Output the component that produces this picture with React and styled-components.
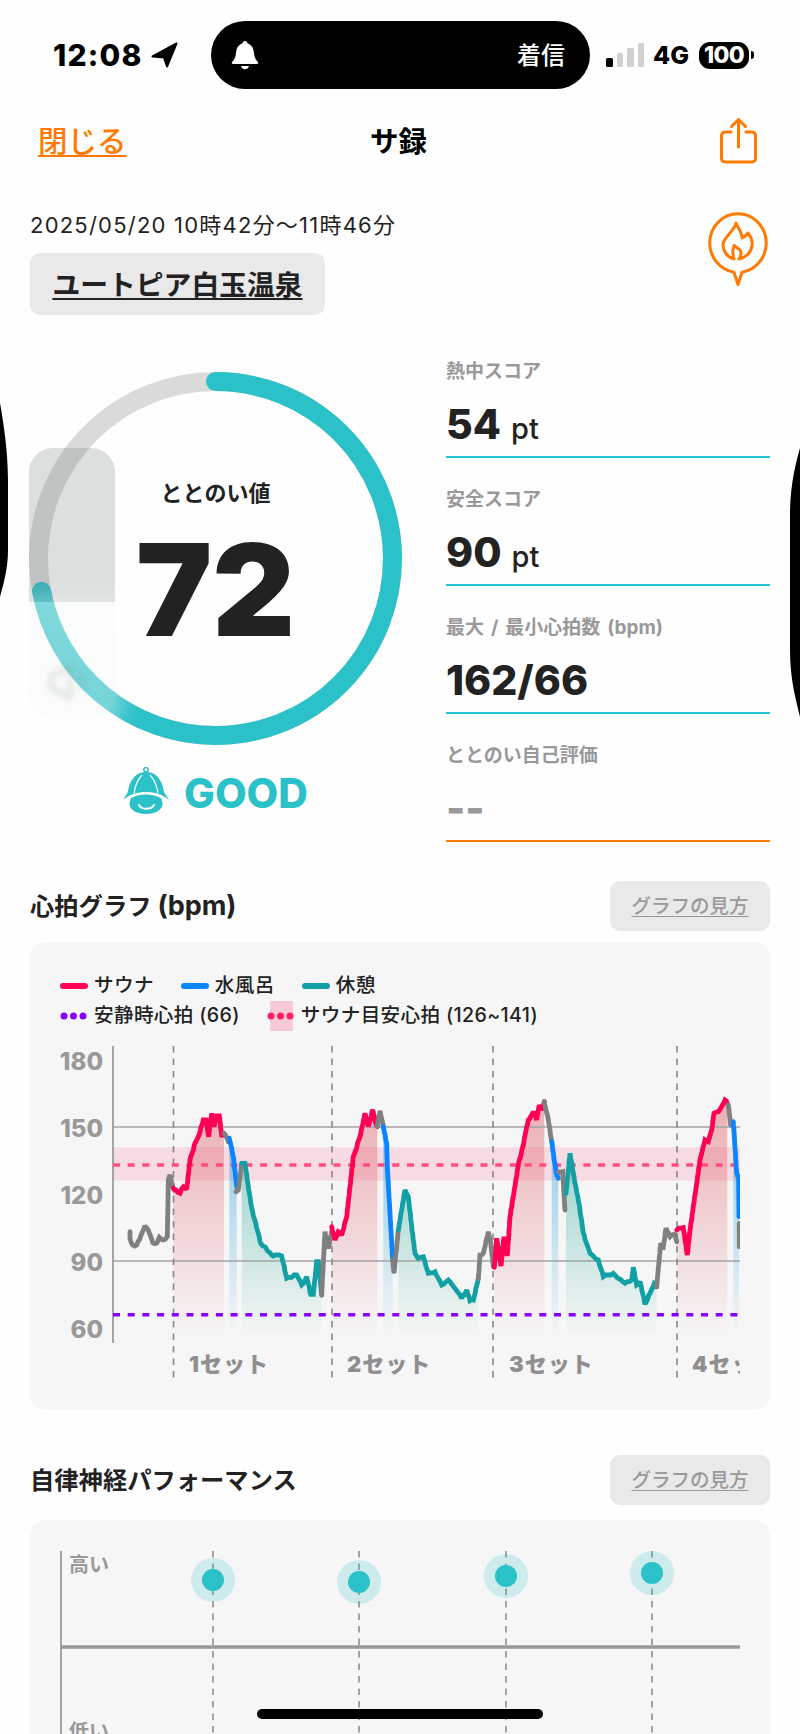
import React from "react";
import styled, { createGlobalStyle } from "styled-components";
import { Volume1 } from "lucide-react";

const TEAL = "#2bc1c8";
const ORANGE = "#ff7a00";
const INK = "#222222";
const MUTED = "#999999";
const FONT = `Inter, "Noto Sans CJK JP", sans-serif`;

const Global = createGlobalStyle`
  html, body { margin: 0; padding: 0; background: #fff; }
  body { font-family: ${FONT}; color: ${INK}; }
`;

const Screen = styled.div`
  position: relative;
  width: 800px;
  height: 1734px;
  overflow: hidden;
  background: #fefefe;
`;

/* ---------- status bar ---------- */
const StatusBar = styled.div`
  display: flex;
  align-items: center;
  height: 110px;
  padding-left: 53px;
`;
const TimeGroup = styled.div`
  display: flex;
  align-items: center;
  gap: 8px;
  width: 158px;
`;
const Time = styled.span`
  font-size: 30px;
  font-weight: 800;
  letter-spacing: 1.2px;
  color: #000;
  line-height: 1;
`;
const Island = styled.div`
  display: flex;
  align-items: center;
  justify-content: space-between;
  width: 379px;
  height: 68px;
  box-sizing: border-box;
  padding: 0 25px 0 20px;
  border-radius: 34px;
  background: #000;
`;
const IslandText = styled.span`
  color: #fff;
  font-size: 24px;
  font-weight: 500;
  padding-bottom: 4px;
`;
const StatusRight = styled.div`
  display: flex;
  align-items: center;
  margin-left: 16px;
`;
const Signal = styled.div`
  display: flex;
  align-items: flex-end;
  gap: 4px;
  height: 24px;
  margin-right: 9px;
`;
const SignalBar = styled.span`
  width: 6.5px;
  height: ${(p) => p.$h}px;
  border-radius: 1.5px;
  background: ${(p) => (p.$on ? "#000" : "#d0d0d0")};
`;
const Net = styled.span`
  font-size: 25px;
  font-weight: 800;
  color: #000;
  width: 46px;
`;
const Battery = styled.span`
  display: flex;
  align-items: center;
  justify-content: center;
  width: 50px;
  height: 27px;
  border-radius: 11px;
  background: #000;
  color: #fff;
  font-size: 23px;
  font-weight: 800;
  letter-spacing: -0.6px;
`;
const BatteryTip = styled.span`
  width: 2.5px;
  height: 8px;
  margin-left: 2px;
  border-radius: 0 3px 3px 0;
  background: #000;
`;

/* ---------- nav ---------- */
const Nav = styled.div`
  display: grid;
  grid-template-columns: 1fr auto 1fr;
  align-items: center;
  height: 62px;
  padding: 0 43px 0 38px;
`;
const CloseLink = styled.a`
  justify-self: start;
  margin-bottom: 4px;
  font-size: 29.5px;
  font-weight: 500;
  color: ${ORANGE};
  text-decoration: underline;
  text-underline-offset: 3px;
  text-decoration-thickness: 2px;
`;
const NavTitle = styled.div`
  margin: 0 0 4px 2px;
  font-size: 28.5px;
  font-weight: 700;
  color: #000;
`;
const ShareSlot = styled.div`
  justify-self: end;
  display: flex;
`;

/* ---------- facility ---------- */
const Visit = styled.div`
  display: flex;
  justify-content: space-between;
  align-items: flex-start;
  padding: 40px 32px 0 30px;
`;
const DateText = styled.div`
  font-size: 22px;
  line-height: 26px;
  font-weight: 400;
  letter-spacing: 1.22px;
  color: ${INK};
`;
const FacilityChip = styled.div`
  display: inline-flex;
  align-items: center;
  justify-content: center;
  width: 295px;
  height: 62px;
  margin-top: 15px;
  padding-bottom: 2px;
  box-sizing: border-box;
  border-radius: 10px;
  background: #e9e9e9;
  font-size: 27.8px;
  font-weight: 700;
  color: ${INK};
  text-decoration: underline;
  text-underline-offset: 3px;
  text-decoration-thickness: 2px;
`;

/* ---------- score ---------- */
const ScoreArea = styled.div`
  display: flex;
  padding: 43px 30px 0 29px;
`;
const GaugeColumn = styled.div`
  display: flex;
  flex-direction: column;
  align-items: center;
  width: 373px;
  padding-top: 14px;
`;
const Gauge = styled.div`
  display: grid;
  width: 373px;
  height: 373px;
  & > * { grid-area: 1 / 1; }
`;
const GaugeCenter = styled.div`
  display: flex;
  flex-direction: column;
  align-items: center;
  padding-top: 108px;
`;
const GaugeLabel = styled.div`
  font-size: 22px;
  line-height: 26px;
  font-weight: 700;
`;
const GaugeValue = styled.div`
  margin-top: 34px;
  font-size: 128px;
  line-height: 100px;
  font-weight: 900;
  color: ${INK};
`;
const Rank = styled.div`
  display: flex;
  align-items: center;
  gap: 15px;
  margin-top: 22px;
`;
const RankText = styled.span`
  font-size: 41px;
  line-height: 52px;
  font-weight: 800;
  color: ${TEAL};
`;
const Stats = styled.div`
  display: grid;
  flex: 1;
  gap: 28px;
  margin-left: 44px;
  align-content: start;
`;
const Stat = styled.div`
  height: 100px;
  box-sizing: border-box;
  border-bottom: 2px solid ${(p) => (p.$accent ? ORANGE : "#22c7d0")};
`;
const StatLabel = styled.div`
  font-size: 19px;
  line-height: 28px;
  font-weight: 700;
  word-spacing: 2.5px;
  color: ${MUTED};
`;
const StatValue = styled.div`
  display: flex;
  align-items: baseline;
  gap: 10px;
  margin-top: 16px;
  font-size: 41px;
  line-height: 44px;
  font-weight: 800;
  color: ${(p) => (p.$empty ? MUTED : INK)};
`;
const StatUnit = styled.span`
  font-size: 29px;
  font-weight: 500;
`;

/* ---------- sections ---------- */
const Section = styled.section`
  margin-top: ${(p) => p.$top}px;
  padding: 0 30px;
`;
const SectionHead = styled.div`
  display: flex;
  justify-content: space-between;
  align-items: center;
  height: 50px;
`;
const SectionTitle = styled.h2`
  margin: 0 0 4px;
  font-size: 24.3px;
  font-weight: 700;
  color: ${INK};
`;
const TitleLatin = styled.span`
  margin-left: 6px;
  font-size: 27px;
`;
const GuideButton = styled.button`
  width: 160px;
  height: 50px;
  padding: 0 0 4px;
  border: 0;
  border-radius: 10px;
  background: #e9e9e9;
  font-family: ${FONT};
  font-size: 19.5px;
  font-weight: 500;
  color: ${MUTED};
  text-decoration: underline;
  text-underline-offset: 3px;
`;
const Card = styled.div`
  margin-top: ${(p) => p.$top}px;
  height: ${(p) => p.$h}px;
  border-radius: 16px;
  background: #f6f6f6;
  overflow: hidden;
`;
const Legend = styled.div`
  display: grid;
  padding: 29px 0 0 30px;
`;
const LegendRow = styled.div`
  display: flex;
  gap: 27px;
  height: 30px;
`;
const LegendItem = styled.div`
  display: flex;
  align-items: center;
  gap: 6px;
  font-size: 19.6px;
  letter-spacing: 0.35px;
  line-height: 26px;
  font-weight: 500;
  color: ${INK};
`;
const LegendLabel = styled.span`
  padding-bottom: 3px;
`;
const ChartSvg = styled.svg`
  display: block;
  margin-top: ${(p) => p.$top}px;
`;
const AxisText = styled.text`
  font-family: ${FONT};
  font-size: 24px;
  font-weight: 800;
  fill: ${MUTED};
`;
const SetText = styled.text`
  font-family: ${FONT};
  font-size: 22px;
  font-weight: 900;
  fill: #8f8f8f;
`;
const LevelText = styled.text`
  font-family: ${FONT};
  font-size: 20px;
  font-weight: 700;
  fill: ${MUTED};
`;

/* ---------- overlays ---------- */
const SideBlob = styled.svg`
  position: absolute;
  top: 0;
  left: 0;
  pointer-events: none;
`;
const VolumeHud = styled.div`
  position: absolute;
  left: 29px;
  top: 448px;
  width: 86px;
  height: 154px;
  border-radius: 24px 24px 0 0;
  background: rgba(110, 120, 120, 0.23);
`;
const VolumeFog = styled.div`
  position: absolute;
  left: 29px;
  top: 602px;
  width: 86px;
  height: 118px;
  display: flex;
  align-items: flex-start;
  justify-content: center;
  padding-top: 55px;
  box-sizing: border-box;
  border-radius: 0 0 24px 24px;
  background: linear-gradient(rgba(246, 248, 248, 0.42), rgba(243, 246, 246, 0.36));
  box-shadow: 0 6px 24px 6px rgba(255, 255, 255, 0.45);
  color: rgba(110, 120, 120, 0.2);
  & > svg { filter: blur(3px); }
`;
const HomeBar = styled.div`
  position: absolute;
  left: 257px;
  top: 1709px;
  width: 286px;
  height: 10px;
  border-radius: 5px;
  background: #000;
`;

/* ---------- data ---------- */
const L = (a) => a.map(([x, y]) => [20 + x / 3, 1130 + y / 3]);
const R = (a) => a.map(([x, y]) => [400 + x / 3, 1130 + y / 3]);
const COLORS = { gray: "#808080", red: "#ff0055", blue: "#0a84ff", teal: "#12a0a4" };

const segments = [
  ["gray", L([[330,305],[330,325],[338,345],[350,345],[358,330],[375,288],[385,300],[398,338],[410,340],[418,322],[430,330],[442,320],[445,150],[450,135],[460,175]])],
  ["red", L([[460,175],[468,180],[480,190],[490,170],[500,178],[510,90],[525,40],[535,20],[550,-30],[558,-30],[566,20],[575,-50],[582,-10],[590,-42],[598,-42],[605,15],[612,15]])],
  ["gray", L([[612,10],[625,35]])],
  ["blue", L([[628,25],[640,80],[650,170]])],
  ["gray", L([[648,185],[655,180],[665,100]])],
  ["teal", L([[665,100],[675,100],[685,170],[695,235],[712,300],[722,340],[735,350],[745,365],[760,378],[785,378],[800,445],[830,435],[845,465],[860,440],[872,493],[880,493],[890,395],[895,395],[905,495]])],
  ["gray", L([[905,495],[915,305],[925,355],[935,305]])],
  ["red", L([[935,290],[945,330],[955,305],[965,315],[980,260],[1000,80],[1020,20],[1035,-50],[1045,-10],[1058,-60],[1065,-30],[1072,-10]])],
  ["gray", L([[1072,-10],[1080,-58],[1090,-10]])],
  ["blue", L([[1090,-10],[1100,40],[1102,110],[1110,250],[1118,390]])],
  ["gray", L([[1118,390],[1122,430],[1135,300]])],
  ["teal", [...L([[1135,300],[1145,240],[1155,180],[1165,200],[1175,290],[1185,370],[1195,385]]), ...R([[70,380],[85,430],[105,425],[125,465],[145,450],[185,505],[200,480],[210,512],[220,510],[235,445]])]],
  ["gray", R([[235,445],[240,375],[250,370],[265,305],[272,340],[280,410]])],
  ["red", R([[283,412],[290,325],[303,408],[312,320],[322,378],[330,260],[355,105],[370,45],[380,-10],[385,-30],[400,-55],[410,-30],[418,-75],[425,-60],[433,-85]])],
  ["gray", R([[433,-85],[445,-30],[455,35]])],
  ["blue", R([[455,35],[468,125],[475,145]])],
  ["gray", R([[475,125],[488,125],[495,240]])],
  ["teal", R([[498,190],[510,70],[525,160],[537,220],[550,310],[570,370],[595,390],[610,440],[640,430],[655,445],[675,460],[695,450],[700,412],[710,465],[720,455],[735,522],[750,490],[763,460],[770,470]])],
  ["gray", R([[770,470],[782,340],[790,350],[798,295],[810,320],[825,310],[830,335]])],
  ["red", R([[830,300],[850,293],[862,375],[870,300],[900,90],[915,30],[925,35],[935,0],[942,-50],[955,-55],[975,-90],[982,-80]])],
  ["gray", R([[985,-75],[992,-15]])],
  ["blue", R([[1000,-25],[1010,130],[1016,150],[1017,260]])],
  ["gray", R([[1018,280],[1018,350]])],
];

const pts = (a) => a.map(([x, y]) => `${x.toFixed(1)},${y.toFixed(1)}`).join(" ");
const area = (a, bottom) => pts([...a, [a[a.length - 1][0], bottom], [a[0][0], bottom]]);
const stepped = (a) => {
  const out = [a[0]];
  for (let i = 1; i < a.length; i++) {
    const [x0, y0] = a[i - 1];
    const [x1, y1] = a[i];
    const n = Math.max(1, Math.ceil(Math.hypot(x1 - x0, y1 - y0) / 3));
    for (let k = 1; k <= n; k++) {
      const px = x0 + ((x1 - x0) * k) / n;
      const py = y0 + ((y1 - y0) * k) / n;
      out.push(k === n ? [px, py] : [px, Math.round(py / 2.233) * 2.233]);
    }
  }
  return out;
};

const y = (v) => 1261 - (v - 90) * (67 / 30);
const axisLabels = [[180, 1061], [150, 1128], [120, 1195], [90, 1262], [60, 1329]];
const setLines = [173.5, 332, 493, 677];
const setLabels = [["1セット", 189], ["2セット", 347], ["3セット", 509], ["4セット", 692]];
const ansLines = [213, 359, 506, 652];
const ansDots = [[213, 1580], [359, 1582], [506, 1576], [652, 1573]];
const stats = [
  { label: "熱中スコア", value: "54", unit: "pt" },
  { label: "安全スコア", value: "90", unit: "pt" },
  { label: "最大 / 最小心拍数 (bpm)", value: "162/66" },
];

const R_MID = 177;
const CIRC = 2 * Math.PI * R_MID;

/* ---------- drawings ---------- */
const LocationArrow = () => (
  <svg width="27" height="26" viewBox="0 0 27 26">
    <path d="M25.5 1.5 1.5 14.5l11.5 1 3 9z" fill="#000" stroke="#000" strokeWidth="2" strokeLinejoin="round" />
  </svg>
);
const Bell = () => (
  <svg width="28" height="30" viewBox="0 0 28 30">
    <path d="M14 1c1.5 0 2.4 1 2.6 2.4C21 4.6 22.6 8.6 23 13c.4 4 1.4 6.600 4 9 .6.800.2 2-1 2H2c-1.200 0-1.600-1.200-1-2 2.600-2.400 3.600-5 4-9 .4-4.400 2-8.400 6.400-9.600C11.600 2 12.500 1 14 1z" fill="#fff" />
    <path d="M10 26h8c-.4 2-2 3.200-4 3.200S10.400 28 10 26z" fill="#fff" />
  </svg>
);
const ShareIcon = () => (
  <svg width="37" height="46" viewBox="0 0 37 46" fill="none" stroke={ORANGE} strokeWidth="3" strokeLinecap="round" strokeLinejoin="round">
    <path d="M11 14H5a3.500 3.500 0 0 0-3.500 3.500v23A3.500 3.500 0 0 0 5 44h27a3.500 3.500 0 0 0 3.500-3.500v-23A3.500 3.500 0 0 0 32 14h-6" />
    <path d="M18.500 29V2M11.500 8.500l7-7 7 7" />
  </svg>
);
const FlamePin = () => (
  <svg width="60" height="74" viewBox="0 0 60 74" fill="none" stroke={ORANGE} strokeWidth="3" strokeLinejoin="round" strokeLinecap="round">
    <path d="M30 72.500 26 60.200C13 58.300 1.700 46 1.700 31 1.700 15 14.400 1.700 30 1.700S58.300 15 58.300 31c0 15-11.300 27.300-24.300 29.200z" />
    <path d="M28 11C30 16 34 20 34 26C36 25 39 23 40 21C43 25 45 29 44 34C43 41 37 46 31 47C33 44 34 41 32 38C30 36 28 35 26 33.500C26 36 24 38 25 41C25 43 25 45 26 47C19 45 15 39 15 33C15 25 26 20 28 11z" />
  </svg>
);
const MascotHat = () => (
  <svg width="46" height="52" viewBox="0 0 46 52">
    <circle cx="23" cy="2.800" r="2.200" fill="none" stroke={TEAL} strokeWidth="1.500" />
    <path d="M23 5C11 5 6 16 5 25L0 33C7 27 15 25 23 25S39 27 46 33L41 25C40 16 35 5 23 5z" fill={TEAL} />
    <path d="M19 8C14 13 12 20 11 26M27 8C32 13 34 20 35 26" fill="none" stroke="#fff" strokeWidth="1.300" />
    <path d="M8 31C13 28.500 18 27.500 23 27.500S33 28.500 38 31C39 33 39.500 35 39.500 37C39.500 43 32 47 23 47S6.500 43 6.500 37C6.500 35 7 33 8 31z" fill={TEAL} />
    <path d="M16 38C18 43 28 43 31 38" fill="none" stroke="#fff" strokeWidth="2" strokeLinecap="round" />
  </svg>
);
const LineSwatch = ({ color }) => (
  <svg width="28" height="8" viewBox="0 0 28 8">
    <rect x="0" y="1" width="28" height="6" rx="3" fill={color} />
  </svg>
);
const DotSwatch = ({ color, band }) => (
  <svg width="28" height="30" viewBox="0 0 28 30">
    {band && <rect x="3" y="0" width="23" height="30" fill="#f6c9d6" />}
    {[4, 13.500, 23].map((cx) => <circle key={cx} cx={cx} cy="15" r="3.500" fill={color} />)}
  </svg>
);

export default function App() {
  return (
    <Screen>
      <Global />
      <StatusBar>
        <TimeGroup>
          <Time>12:08</Time>
          <LocationArrow />
        </TimeGroup>
        <Island>
          <Bell />
          <IslandText>着信</IslandText>
        </Island>
        <StatusRight>
          <Signal>
            <SignalBar $h={9} $on />
            <SignalBar $h={14} />
            <SignalBar $h={19} />
            <SignalBar $h={24} />
          </Signal>
          <Net>4G</Net>
          <Battery>100</Battery>
          <BatteryTip />
        </StatusRight>
      </StatusBar>

      <Nav>
        <CloseLink>閉じる</CloseLink>
        <NavTitle>サ録</NavTitle>
        <ShareSlot><ShareIcon /></ShareSlot>
      </Nav>

      <Visit>
        <div>
          <DateText>2025/05/20 10時42分〜11時46分</DateText>
          <FacilityChip>ユートピア白玉温泉</FacilityChip>
        </div>
        <FlamePin />
      </Visit>

      <ScoreArea>
        <GaugeColumn>
          <Gauge>
            <svg width="373" height="373" viewBox="0 0 373 373">
              <circle cx="186.500" cy="186.500" r={R_MID} fill="none" stroke="#dadada" strokeWidth="19" />
              <circle
                cx="186.500"
                cy="186.500"
                r={R_MID}
                fill="none"
                stroke={TEAL}
                strokeWidth="19"
                strokeLinecap="round"
                strokeDasharray={`${CIRC * 0.72} ${CIRC}`}
                transform="rotate(-90 186.500 186.500)"
              />
            </svg>
            <GaugeCenter>
              <GaugeLabel>ととのい値</GaugeLabel>
              <GaugeValue>72</GaugeValue>
            </GaugeCenter>
          </Gauge>
          <Rank>
            <MascotHat />
            <RankText>GOOD</RankText>
          </Rank>
        </GaugeColumn>
        <Stats>
          {stats.map((s) => (
            <Stat key={s.label}>
              <StatLabel>{s.label}</StatLabel>
              <StatValue>
                {s.value}
                {s.unit && <StatUnit>{s.unit}</StatUnit>}
              </StatValue>
            </Stat>
          ))}
          <Stat $accent>
            <StatLabel>ととのい自己評価</StatLabel>
            <StatValue $empty>--</StatValue>
          </Stat>
        </Stats>
      </ScoreArea>

      <Section $top={39}>
        <SectionHead>
          <SectionTitle>心拍グラフ<TitleLatin>(bpm)</TitleLatin></SectionTitle>
          <GuideButton>グラフの見方</GuideButton>
        </SectionHead>
        <Card $top={11} $h={468}>
          <Legend>
            <LegendRow>
              <LegendItem><LineSwatch color="#ff0055" /><LegendLabel>サウナ</LegendLabel></LegendItem>
              <LegendItem><LineSwatch color="#0a84ff" /><LegendLabel>水風呂</LegendLabel></LegendItem>
              <LegendItem><LineSwatch color="#12a0a4" /><LegendLabel>休憩</LegendLabel></LegendItem>
            </LegendRow>
            <LegendRow>
              <LegendItem><DotSwatch color="#8800ff" /><LegendLabel>安静時心拍 (66)</LegendLabel></LegendItem>
              <LegendItem><DotSwatch color="#ff1f66" band /><LegendLabel>サウナ目安心拍 (126~141)</LegendLabel></LegendItem>
            </LegendRow>
          </Legend>
          <ChartSvg $top={9} width="740" height="350" viewBox="30 1040 740 350">
            <defs>
              <linearGradient id="fred" gradientUnits="userSpaceOnUse" x1="0" y1="1100" x2="0" y2="1338">
                <stop offset="0" stopColor="#dd4a55" stopOpacity=".42" />
                <stop offset="1" stopColor="#dd4a55" stopOpacity="0" />
              </linearGradient>
              <linearGradient id="fblue" gradientUnits="userSpaceOnUse" x1="0" y1="1130" x2="0" y2="1338">
                <stop offset="0" stopColor="#0a8fd0" stopOpacity=".42" />
                <stop offset="1" stopColor="#0a8fd0" stopOpacity="0" />
              </linearGradient>
              <linearGradient id="fteal" gradientUnits="userSpaceOnUse" x1="0" y1="1150" x2="0" y2="1338">
                <stop offset="0" stopColor="#12a090" stopOpacity=".4" />
                <stop offset="1" stopColor="#12a090" stopOpacity="0" />
              </linearGradient>
              <clipPath id="plot"><rect x="100" y="1040" width="640" height="350" /></clipPath>
            </defs>
            <rect x="113" y={y(141)} width="627" height={y(126) - y(141)} fill="#ff5080" fillOpacity=".16" />
            {segments.filter(([c]) => c !== "gray").map(([c, a], i) => (
              <polygon key={i} points={area(a, 1338)} fill={`url(#f${c})`} clipPath="url(#plot)" />
            ))}
            {[150, 90].map((v) => (
              <line key={v} x1="113" x2="740" y1={y(v)} y2={y(v)} stroke="#a3a3a3" strokeWidth="1.500" />
            ))}
            <line x1="113" x2="113" y1="1046" y2="1343" stroke="#8a8a8a" strokeWidth="1.500" />
            {setLines.map((x) => (
              <line key={x} x1={x} x2={x} y1="1046" y2="1380" stroke="#888" strokeWidth="1.600" strokeDasharray="6.500 6" />
            ))}
            <line x1="113" x2="740" y1="1165" y2="1165" stroke="#ff4d80" strokeWidth="3.500" strokeDasharray="7 7.700" />
            <line x1="113" x2="740" y1="1314.700" y2="1314.700" stroke="#8800ff" strokeWidth="3.500" strokeDasharray="7 7.700" />
            <g clipPath="url(#plot)">
              {segments.map(([c, a], i) => (
                <polyline key={i} points={pts(stepped(a))} fill="none" stroke={COLORS[c]} strokeWidth="4.800" strokeLinejoin="miter" strokeMiterlimit="2" strokeLinecap="round" />
              ))}
              {setLabels.map(([t, x]) => (
                <SetText key={t} x={x} y="1372" letterSpacing="1">{t}</SetText>
              ))}
            </g>
            {axisLabels.map(([v, cy]) => (
              <AxisText key={v} x="103" y={cy + 9} textAnchor="end">{v}</AxisText>
            ))}
          </ChartSvg>
        </Card>
      </Section>

      <Section $top={45}>
        <SectionHead>
          <SectionTitle>自律神経パフォーマンス</SectionTitle>
          <GuideButton>グラフの見方</GuideButton>
        </SectionHead>
        <Card $top={15} $h={300}>
          <ChartSvg $top={0} width="740" height="230" viewBox="30 1520 740 230">
            <line x1="61" x2="61" y1="1551" y2="1750" stroke="#8a8a8a" strokeWidth="1.500" />
            <line x1="61" x2="740" y1="1647" y2="1647" stroke="#999" strokeWidth="3.500" />
            {ansLines.map((x) => (
              <line key={x} x1={x} x2={x} y1="1551" y2="1750" stroke="#888" strokeWidth="1.500" strokeDasharray="6.500 6" />
            ))}
            {ansDots.map(([cx, cy]) => (
              <g key={cx}>
                <circle cx={cx} cy={cy} r="22" fill={TEAL} fillOpacity=".2" />
                <circle cx={cx} cy={cy} r="11" fill={TEAL} />
              </g>
            ))}
            <LevelText x="69" y="1572">高い</LevelText>
            <LevelText x="69" y="1739">低い</LevelText>
          </ChartSvg>
        </Card>
      </Section>

      <SideBlob width="800" height="800" viewBox="0 0 800 800">
        <path d="M0 403C3 420 8 450 8 480V550C8 570 3 585 0 597z" fill="#000" />
        <path d="M800 448C796 462 790 485 790 515V650C790 680 796 700 800 717z" fill="#000" />
      </SideBlob>
      <VolumeHud />
      <VolumeFog><Volume1 size={50} /></VolumeFog>
      <HomeBar />
    </Screen>
  );
}
